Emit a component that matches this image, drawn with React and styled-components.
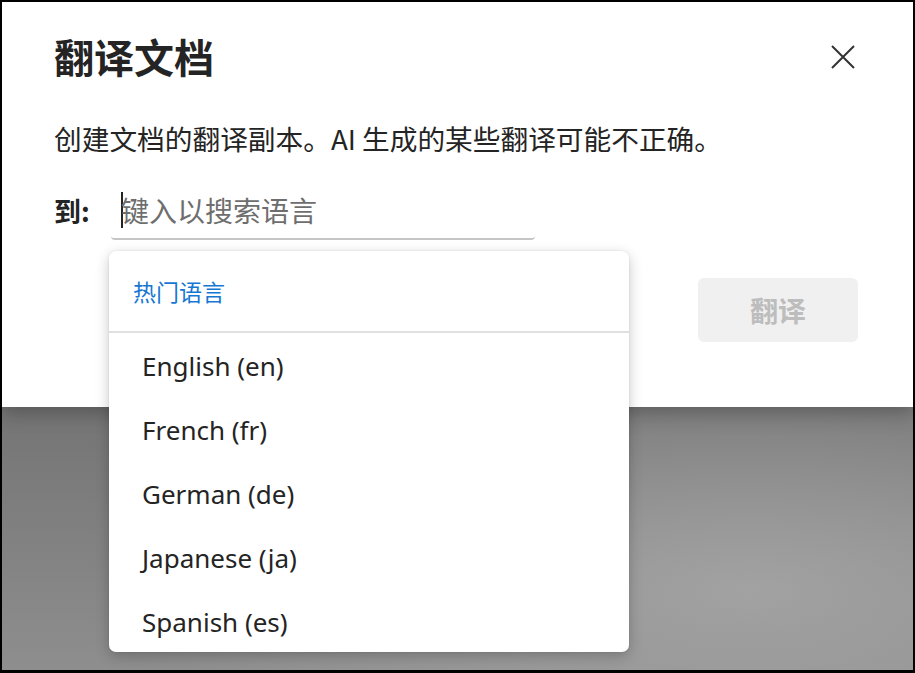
import React from "react";
import styled, { createGlobalStyle } from "styled-components";

const Global = createGlobalStyle`
  html, body { margin: 0; padding: 0; background: #000; }
  * { box-sizing: border-box; }
`;

const Frame = styled.div`
  position: relative;
  width: 915px;
  height: 673px;
  border-style: solid;
  border-color: #000;
  border-width: 2px 2px 3px 2px;
  display: flex;
  flex-direction: column;
  overflow: hidden;
  font-family: "Noto Sans", "Noto Sans CJK SC", sans-serif;
  color: #242424;
`;

const Dialog = styled.div`
  position: relative;
  z-index: 1;
  height: 405px;
  background: #fff;
  padding: 26px 57px 0 52px;
  display: flex;
  flex-direction: column;
  box-shadow: 0 6px 18px rgba(0, 0, 0, 0.25);
`;

const HeaderRow = styled.div`
  display: flex;
  align-items: flex-start;
  justify-content: space-between;
`;

const Title = styled.h1`
  margin: 0;
  font-family: "Noto Sans CJK SC", sans-serif;
  font-size: 40px;
  line-height: 56px;
  font-weight: 700;
  color: #242424;
`;

const CloseButton = styled.button`
  border: none;
  background: transparent;
  padding: 0;
  margin-top: 16px;
  width: 26px;
  height: 26px;
  display: flex;
  align-items: center;
  justify-content: center;
  cursor: pointer;
`;

const Description = styled.p`
  margin: 36px 0 0 0;
  font-family: "Noto Sans CJK SC", sans-serif;
  font-size: 27.7px;
  line-height: 36px;
  color: #242424;
`;

const FieldRow = styled.div`
  margin-top: 26px;
  display: flex;
  align-items: center;
`;

const Label = styled.label`
  font-family: "Noto Sans CJK SC", sans-serif;
  font-size: 27px;
  font-weight: 700;
  width: 57px;
  flex: none;
  line-height: 36px;
`;

const InputWrap = styled.div`
  width: 424px;
  height: 58px;
  border-bottom: 2px solid #c6c6c6;
  border-radius: 0 0 4px 4px;
  display: flex;
  align-items: center;
  padding-left: 10px;
`;

const Caret = styled.span`
  display: inline-block;
  width: 2px;
  height: 36px;
  background: #242424;
`;

const Placeholder = styled.span`
  margin-left: -2px;
  font-family: "Noto Sans CJK SC", sans-serif;
  font-size: 28px;
  line-height: 36px;
  color: #6e6e6e;
`;

const Actions = styled.div`
  margin-top: 38px;
  display: flex;
  justify-content: flex-end;
  margin-right: -2px;
`;

const PrimaryButton = styled.button`
  width: 160px;
  height: 64px;
  border: none;
  border-radius: 6px;
  background: #f0f0f0;
  color: #bdbdbd;
  font-family: "Noto Sans CJK SC", sans-serif;
  font-size: 28px;
  font-weight: 700;
`;

const Backdrop = styled.div`
  flex: 1;
  background:
    radial-gradient(ellipse 70% 90% at 82% 70%, #a2a2a2 0%, rgba(160,160,160,0) 100%),
    linear-gradient(180deg, #747474 0%, #8e8e8e 100%);
`;

const Menu = styled.div`
  position: absolute;
  z-index: 2;
  left: 107px;
  top: 249px;
  width: 520px;
  height: 401px;
  background: #fff;
  border-radius: 7px;
  box-shadow: 0 4px 14px rgba(0, 0, 0, 0.22), 0 0 2px rgba(0, 0, 0, 0.12);
  display: flex;
  flex-direction: column;
`;

const GroupHeader = styled.div`
  height: 82px;
  border-bottom: 2px solid #e0e0e0;
  display: flex;
  align-items: center;
  padding-left: 24px;
  font-family: "Noto Sans CJK SC", sans-serif;
  font-size: 23px;
  color: #1677d2;
`;

const Option = styled.div`
  height: 64px;
  display: flex;
  align-items: center;
  padding-left: 33px;
  padding-top: 3px;
  font-family: "Noto Sans", sans-serif;
  font-size: 26px;
  color: #242424;
`;

const languages = [
  "English (en)",
  "French (fr)",
  "German (de)",
  "Japanese (ja)",
  "Spanish (es)",
];

export default function App() {
  return (
    <>
      <Global />
      <Frame>
        <Dialog>
          <HeaderRow>
            <Title>翻译文档</Title>
            <CloseButton aria-label="关闭">
              <svg width="24" height="24" viewBox="0 0 24 24">
                <path d="M1 1 L23 23 M23 1 L1 23" stroke="#333" strokeWidth="2" fill="none" />
              </svg>
            </CloseButton>
          </HeaderRow>
          <Description>创建文档的翻译副本。AI 生成的某些翻译可能不正确。</Description>
          <FieldRow>
            <Label>到:</Label>
            <InputWrap>
              <Caret />
              <Placeholder>键入以搜索语言</Placeholder>
            </InputWrap>
          </FieldRow>
          <Actions>
            <PrimaryButton disabled>翻译</PrimaryButton>
          </Actions>
        </Dialog>
        <Backdrop />
        <Menu>
          <GroupHeader>热门语言</GroupHeader>
          {languages.map((l) => (
            <Option key={l}>{l}</Option>
          ))}
        </Menu>
      </Frame>
    </>
  );
}
